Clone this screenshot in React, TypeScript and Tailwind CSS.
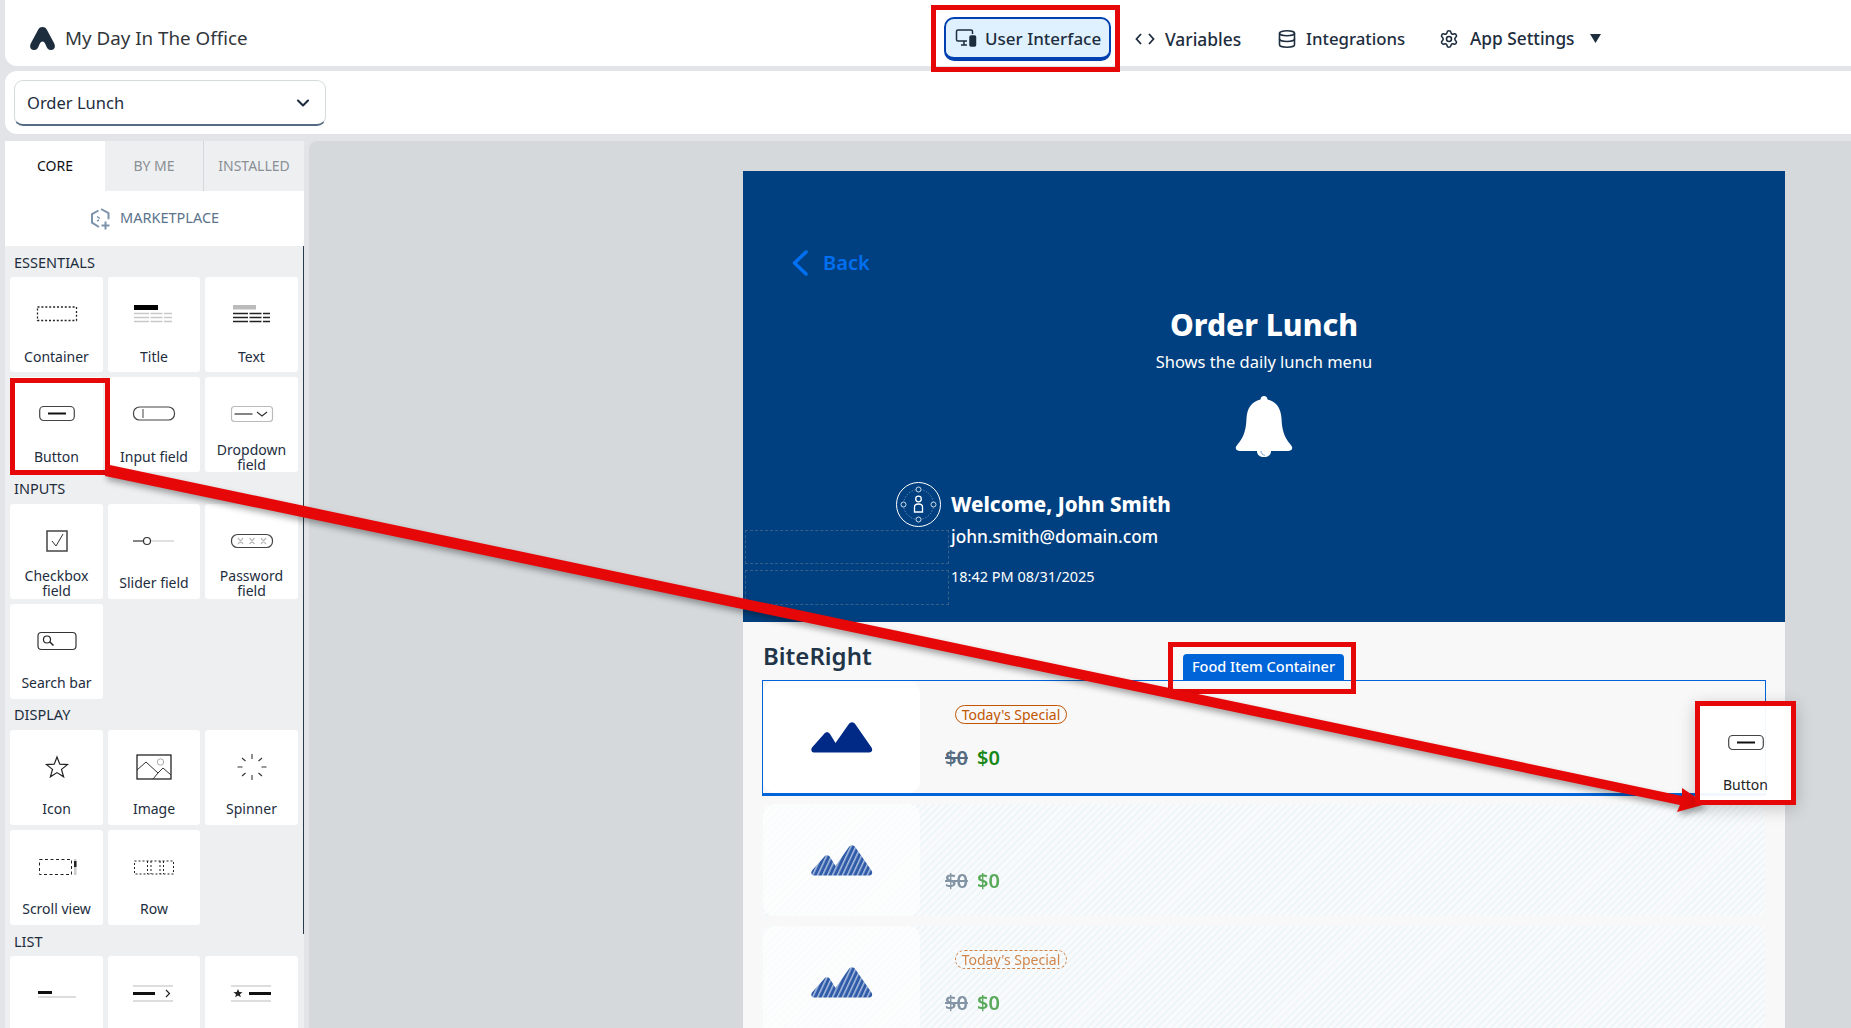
import React from "react";
import { ChevronDown, Database, Settings } from "lucide-react";

function Ico({ children }: { children: React.ReactNode }) {
  return (
    <svg width="48" height="32" viewBox="0 0 48 32" fill="none">
      {children}
    </svg>
  );
}

const icons: Record<string, React.ReactNode> = {
  Container: <rect x="4.5" y="10" width="39" height="13.500" stroke="#222" strokeWidth="1.300" strokeDasharray="2 1.900" />,
  Title: (
    <>
      <rect x="4" y="8" width="24" height="5" fill="#000" />
      <path d="M4 16.500h38M4 20.500h38M4 24.500h38" stroke="#c8c8c8" strokeWidth="1.500" strokeDasharray="15 1.500 12 1.500 8" />
    </>
  ),
  Text: (
    <>
      <rect x="5" y="8" width="23" height="4.500" fill="#bbb" />
      <path d="M5 16.500h37M5 20.500h37M5 24.500h37" stroke="#222" strokeWidth="1.500" strokeDasharray="15 1.500 12 1.500 8" />
    </>
  ),
  Button: (
    <>
      <rect x="6.700" y="9.500" width="34.600" height="14" rx="4" stroke="#444" strokeWidth="1.200" />
      <path d="M15 16.500h18" stroke="#111" strokeWidth="2" />
    </>
  ),
  "Input field": (
    <>
      <rect x="3.500" y="10" width="41" height="13" rx="6" stroke="#444" strokeWidth="1.200" />
      <path d="M13 12v9" stroke="#444" strokeWidth="1" />
    </>
  ),
  "Dropdown field": (
    <>
      <rect x="3.500" y="9.500" width="41" height="15" rx="3" stroke="#bbb" strokeWidth="1.200" />
      <path d="M6.500 17h18" stroke="#333" strokeWidth="1.200" />
      <path d="M29 15l5 4 5-4" stroke="#333" strokeWidth="1.200" />
    </>
  ),
  "Checkbox field": (
    <>
      <rect x="14" y="6" width="20" height="20" stroke="#444" strokeWidth="1.500" />
      <path d="M19 16l4 5 7-12" stroke="#333" strokeWidth="1" />
    </>
  ),
  "Slider field": (
    <>
      <path d="M3 16h10" stroke="#333" strokeWidth="1.200" />
      <path d="M21 16h23" stroke="#ccc" strokeWidth="1.200" />
      <circle cx="17" cy="16" r="3.500" stroke="#333" strokeWidth="1.200" />
    </>
  ),
  "Password field": (
    <>
      <rect x="3.500" y="9.500" width="41" height="13" rx="6" stroke="#444" strokeWidth="1.200" />
      <path d="M10 13l5 6M15 13l-5 6M21.500 13l5 6M26.500 13l-5 6M33 13l5 6M38 13l-5 6" stroke="#bbb" strokeWidth="1.200" />
    </>
  ),
  "Search bar": (
    <>
      <rect x="5" y="7.500" width="38" height="17" rx="3.500" stroke="#333" strokeWidth="1.200" />
      <circle cx="14" cy="14.500" r="3.500" stroke="#222" strokeWidth="1.200" />
      <path d="M17 17l3.500 3.500" stroke="#222" strokeWidth="1.500" />
    </>
  ),
  Icon: <path d="M24 6l2.800 7.200 7.700.4-6 4.800 2.100 7.400L24 21.600l-6.600 4.200 2.100-7.400-6-4.800 7.700-.4z" stroke="#222" strokeWidth="1.200" />,
  Image: (
    <>
      <rect x="7" y="4" width="34" height="24" stroke="#111" strokeWidth="1.200" />
      <circle cx="30.500" cy="11" r="3.200" stroke="#aaa" strokeWidth="1" />
      <path d="M7 19l9-8 12 11-5 6M28 22l5-5 8 7" stroke="#333" strokeWidth="1" />
    </>
  ),
  Spinner: <path d="M24 3v5M24 24v5M9.500 16h5M33.500 16h5M14 7l3.500 3M34 7l-3.500 3M14 25l3.500-3M34 25l-3.500-3" stroke="#333" strokeWidth="1.100" />,
  "Scroll view": (
    <>
      <rect x="6.500" y="8.500" width="32" height="15" stroke="#222" strokeWidth="1" strokeDasharray="3 2.500" />
      <rect x="41" y="8" width="2.500" height="16" fill="#ccc" />
      <rect x="41" y="10" width="2.500" height="6" fill="#222" />
    </>
  ),
  Row: (
    <>
      <rect x="4.500" y="10" width="39" height="13" stroke="#222" strokeWidth="1" strokeDasharray="2 2" />
      <path d="M17.500 10v13M21 10v13M30 10v13M33.500 10v13" stroke="#222" strokeWidth="1" strokeDasharray="2 2" />
    </>
  ),
  "List section": (
    <>
      <rect x="5" y="14" width="14" height="3" fill="#111" />
      <path d="M5 20h38" stroke="#bbb" strokeWidth="1.200" />
    </>
  ),
  "List item": (
    <>
      <path d="M3 9h40M3 24h40" stroke="#bbb" strokeWidth="1.200" />
      <rect x="3" y="15" width="22" height="3" fill="#111" />
      <path d="M36 13l3.500 3.500-3.500 3.500" stroke="#222" strokeWidth="1.200" />
    </>
  ),
  "Icon list": (
    <>
      <path d="M3 9h40M3 24h40" stroke="#bbb" strokeWidth="1.200" />
      <path d="M10 12l1.300 3 3.200.2-2.500 2 .8 3.100-2.800-1.700-2.800 1.700.8-3.100-2.500-2 3.200-.2z" fill="#222" />
      <rect x="21" y="15" width="22" height="3" fill="#111" />
    </>
  ),
};

function Tile({ name, low, noLabel }: { name: string; low: boolean; noLabel: boolean }) {
  return (
    <div className="h-[95px] bg-white rounded-[3px] flex flex-col items-center">
      <div className={`h-[64px] shrink-0 ${low ? "pt-[21px]" : "pt-[20px]"}`}>
        <Ico>{icons[name]}</Ico>
      </div>
      <div className={`flex items-center justify-center text-center text-[14px] leading-[15px] text-[#1d2d3e] px-2 ${low ? "h-[29px]" : "h-[31px]"}`}>
        {noLabel ? "" : name}
      </div>
    </div>
  );
}

function Group({ title, items, mt, gap, low }: { title: string; items: string[]; mt: string; gap: string; low?: boolean }) {
  return (
    <div>
      <div className={`${mt} h-[16px] leading-[16px] pl-[9px] text-[14.500px] text-[#1d2d3e]`}>{title}</div>
      <div className={`${gap} pl-[5px] grid grid-cols-[93px_92px_93px] gap-[5px]`}>
        {items.map((n) => (
          <Tile key={n} name={n} low={!!low} noLabel={n === "List item"} />
        ))}
      </div>
    </div>
  );
}

function Mountain({ hatched, id }: { hatched?: boolean; id: string }) {
  return (
    <svg width="62" height="31" viewBox="0 0 62 31">
      <defs>
        <pattern id={id} width="4.500" height="4.500" patternUnits="userSpaceOnUse" patternTransform="rotate(25)">
          <rect width="4.500" height="4.500" fill="#2f5ba8" />
          <rect width="1.500" height="4.500" fill="#a9bede" />
        </pattern>
      </defs>
      <path
        d="M3 30.500h55c3 0 4-2.500 2.500-5L44.500 2.500c-2-3-5-3-7 0L24.500 21 19 12c-1.500-2.500-4.500-2.500-6 0L1 25.500c-1.500 2.500-.5 5 2 5z"
        fill={hatched ? `url(#${id})` : "#002a86"}
      />
    </svg>
  );
}

function Special({ dashed }: { dashed?: boolean }) {
  return (
    <div
      className={`ml-[10px] h-[19px] w-[112px] rounded-full border border-[#c35500] flex items-center justify-center text-[14px] leading-none text-[#c35500] ${
        dashed ? "border-dashed opacity-70" : ""
      }`}
    >
      Today's Special
    </div>
  );
}

function Prices({ faded }: { faded?: boolean }) {
  return (
    <div className={`mt-[22px] h-[24px] flex items-center gap-[10px] text-[20px] font-semibold ${faded ? "opacity-70" : ""}`}>
      <span className="line-through text-[#556b81] w-[22px]">$0</span>
      <span className="text-[#188918] w-[22px]">$0</span>
    </div>
  );
}

const hatch =
  "bg-[repeating-linear-gradient(135deg,#eff6f9_0px,#eff6f9_2px,#f8fafb_2px,#f8fafb_5px)]";

function GhostCard({ tag, id }: { tag?: boolean; id: string }) {
  return (
    <div className={`ml-[20px] w-[1002px] h-[112px] ${hatch} flex rounded-sm`}>
      <div className="w-[157px] h-[112px] bg-white/60 rounded-xl flex items-center justify-center shrink-0">
        <Mountain hatched id={id} />
      </div>
      <div className="pl-[25px] pt-[24px]">
        {tag ? <Special dashed /> : <div className="h-[19px]" />}
        <Prices faded />
      </div>
    </div>
  );
}

export default function App() {
  return (
    <div className="relative w-full h-[1028px] overflow-hidden bg-[#e3e4e8] font-['Noto_Sans',sans-serif] text-[#1d2d3e]">
      {/* Top bar */}
      <div className="ml-[5px] h-[66px] bg-white rounded-bl-xl flex items-center pl-[25px]">
        <div className="w-[914px] mt-[10px] flex items-center gap-[10px]">
          <svg width="25" height="23" viewBox="0 0 25 23">
            <path
              d="M12.500 0c-2.300 0-3.600 1.300-4.500 3L1 16c-2 4-.500 7 3 7 3 0 4-2 5-4.500C10 16 11 14.500 12.500 14.500s2.500 1.500 3.500 4c1 2.500 2 4.500 5 4.500 3.500 0 5-3 3-7L17 3c-.9-1.700-2.200-3-4.500-3z"
              fill="#1d2d3e"
            />
          </svg>
          <span className="text-[18.800px] text-[#32363a] leading-none">My Day In The Office</span>
        </div>
        <div className="w-[167px] h-[44px] mt-[12px] rounded-[10px] border-2 border-[#0040b0] border-b-[4px] bg-[#dff1ff] flex items-center pl-[9px] gap-[8px]">
          <svg width="22" height="20" viewBox="0 0 22 20" fill="none" stroke="#1d2d3e" strokeWidth="1.500">
            <path d="M12 13H3a1.500 1.500 0 0 1-1.500-1.500v-8A1.500 1.500 0 0 1 3 2h13a1.500 1.500 0 0 1 1.500 1.500V6" />
            <path d="M6 17h6M9 13v4" />
            <rect x="15" y="8" width="5.500" height="10" fill="#1d2d3e" rx="1" />
          </svg>
          <span className="text-[17px] font-medium leading-none whitespace-nowrap">User Interface</span>
        </div>
        <div className="ml-[24px] flex items-center mt-[12px] font-medium">
          <svg width="20" height="14" viewBox="0 0 20 14" fill="none" stroke="#1d2d3e" strokeWidth="1.800">
            <path d="M6 2L1.500 7 6 12M14 2l4.500 5L14 12" />
          </svg>
          <span className="ml-[10px] w-[74px] text-[17.400px] whitespace-nowrap">Variables</span>
          <Database className="ml-[38px]" size={20} strokeWidth={1.900} />
          <span className="ml-[9px] w-[100px] text-[16.800px] whitespace-nowrap">Integrations</span>
          <Settings className="ml-[33px]" size={20} strokeWidth={1.900} />
          <span className="ml-[11px] w-[102px] text-[17.300px] whitespace-nowrap">App Settings</span>
          <svg className="ml-[18px]" width="11" height="9" viewBox="0 0 11 9">
            <path d="M0 0h11L5.500 9z" fill="#1d2d3e" />
          </svg>
        </div>
      </div>

      {/* Second bar */}
      <div className="mt-[5px] ml-[5px] h-[63px] bg-white rounded-l-xl flex items-center pl-[9px]">
        <div className="w-[312px] h-[46px] mt-[1px] rounded-[9px] border border-[#d5dadd] border-b-2 border-b-[#556b81] flex items-center justify-between pl-[12px] pr-[12px]">
          <span className="text-[16.500px] leading-none mt-[1px]">Order Lunch</span>
          <ChevronDown size={20} strokeWidth={2.500} />
        </div>
      </div>

      {/* Main */}
      <div className="mt-[7px] flex h-[887px]">
        {/* Sidebar */}
        <div className="ml-[5px] w-[299px] shrink-0 bg-[#eeeff1] overflow-hidden relative">
          <div className="flex h-[50px] text-[14px] bg-[#eeeff1]">
            <div className="w-[100px] bg-white flex items-center justify-center text-[#111] pb-[2px]">CORE</div>
            <div className="w-[99px] border-r border-[#d5d9dc] flex items-center justify-center text-[#8a8f95] pb-[2px]">BY ME</div>
            <div className="w-[100px] flex items-center justify-center text-[#8a8f95] pb-[2px]">INSTALLED</div>
          </div>
          <div className="h-[55px] bg-white flex items-center pl-[85px] gap-[9px] text-[14.500px] text-[#5b738b]">
            <svg width="21" height="23" viewBox="0 0 21 23" fill="none" stroke="#7d93aa" strokeWidth="2">
              <path d="M11 2l7.500 4.200v6M8.500 3.500L2 7.200v8.500L9 20" />
              <path d="M15.500 14.500v8M11.500 18.500h8" />
              <path d="M7 9.500l3 2M7 14l2-1" strokeWidth="1.500" />
            </svg>
            <span className="mb-[2px]">MARKETPLACE</span>
          </div>
          <div className="w-[1.500px] h-[688px] absolute left-[298px] top-[105px] bg-[#2b3a4a]" />
          <Group title="ESSENTIALS" mt="mt-[8px]" gap="mt-[7px]" items={["Container", "Title", "Text", "Button", "Input field", "Dropdown field"]} />
          <Group title="INPUTS" mt="mt-[8px]" gap="mt-[8px]" low items={["Checkbox field", "Slider field", "Password field", "Search bar"]} />
          <Group title="DISPLAY" mt="mt-[7px]" gap="mt-[8px]" low items={["Icon", "Image", "Spinner", "Scroll view", "Row"]} />
          <Group title="LIST" mt="mt-[8px]" gap="mt-[7px]" low items={["List section", "List item", "Icon list"]} />
        </div>

        {/* Canvas */}
        <div className="ml-[5px] flex-1 bg-[#d5d9dc] rounded-tl-lg pt-[30px] pl-[434px] overflow-hidden">
          <div className="w-[1042px] h-[857px] bg-[#f8f8f8]">
            {/* Header */}
            <div className="h-[451px] bg-[#004080] flex flex-col pt-[80px]">
              <div className="h-[24px] pl-[49px] flex items-center gap-[15px]">
                <svg width="16" height="26" viewBox="0 0 16 26" fill="none" stroke="#0070f2" strokeWidth="3.500" strokeLinecap="round" strokeLinejoin="round">
                  <path d="M14 2L2.500 13 14 24" />
                </svg>
                <span className="text-[20px] font-semibold text-[#0070f2]">Back</span>
              </div>
              <div className="mt-[32px] h-[36px] leading-[36px] text-center text-[30px] font-extrabold text-white">Order Lunch</div>
              <div className="mt-[7px] h-[24px] leading-[24px] text-center text-[16.500px] text-white">Shows the daily lunch menu</div>
              <div className="mt-[22px] flex justify-center">
                <svg width="58" height="61" viewBox="0 0 58 61">
                  <path
                    d="M29 0c2 0 3.500 1.500 3.500 3.500 9 2 13.500 9 14 19 .500 10 2 18 9 26 3 3.500 2 6-2 6.500H4.500c-4-.500-5-3-2-6.500 7-8 8.500-16 9-26 .500-10 5-17 14-19C25.500 1.500 27 0 29 0z"
                    fill="#fff"
                  />
                  <path d="M22 55h14c0 4-3 6-7 6s-7-2-7-6z" fill="#fff" />
                  <path d="M26 55c0 2.500 1.500 4 4 4.300" fill="none" stroke="#7f9fc6" strokeWidth="1" />
                </svg>
              </div>
              <div className="mt-[25px] flex">
                <div className="ml-[2px] w-[204px] flex flex-col">
                  <div className="self-end mr-[8px] w-[45px] h-[45px]">
                    <svg width="45" height="45" viewBox="0 0 45 45" fill="none" stroke="#fff">
                      <circle cx="22.500" cy="22.500" r="22" strokeWidth="1" />
                      <circle cx="22.500" cy="22.500" r="15" strokeWidth=".5" strokeDasharray="1.500 1.500" opacity=".7" />
                      <circle cx="22.500" cy="7.500" r="2.500" strokeWidth=".8" fill="#004080" />
                      <circle cx="22.500" cy="37.500" r="2.500" strokeWidth=".8" fill="#004080" />
                      <circle cx="7.500" cy="22.500" r="2.500" strokeWidth=".8" fill="#004080" />
                      <circle cx="37.500" cy="22.500" r="2.500" strokeWidth=".8" fill="#004080" />
                      <circle cx="22.500" cy="17" r="2.800" strokeWidth="1.300" />
                      <path d="M18.500 30v-5c0-2 1.500-3 4-3s4 1 4 3v5z" strokeWidth="1.300" />
                    </svg>
                  </div>
                  <div className="mt-[3px] h-[34px] border border-dashed border-[#3a5f86]" />
                  <div className="mt-[6px] h-[35px] border border-dashed border-[#3a5f86]" />
                </div>
                <div className="ml-[2px] pt-[8px] text-white">
                  <div className="h-[28px] leading-[28px] text-[20.500px] font-extrabold">Welcome, John Smith</div>
                  <div className="mt-[7px] h-[24px] leading-[24px] text-[17.300px] font-medium">john.smith@domain.com</div>
                  <div className="mt-[17px] h-[20px] leading-[20px] text-[14.500px]">18:42 PM 08/31/2025</div>
                </div>
              </div>
            </div>

            {/* Body */}
            <div className="h-[58px] flex items-end">
              <div className="self-start mt-[18px] ml-[20px] w-[420px] h-[32px] leading-[32px] text-[24px] font-semibold text-[#223548]">BiteRight</div>
              <div className="h-[26px] w-[161px] rounded-t-[4px] bg-[#0064d9] text-white text-[14.500px] font-medium flex items-center justify-center">
                Food Item Container
              </div>
            </div>
            <div className="ml-[19px] w-[1004px] h-[116px] border border-[#0064d9] border-b-[3px] flex">
              <div className="w-[157px] h-full bg-white rounded-xl flex items-center justify-center shrink-0">
                <Mountain id="solid" />
              </div>
              <div className="pl-[25px] pt-[24px]">
                <Special />
                <Prices />
              </div>
            </div>
            <div className="mt-[8px]">
              <GhostCard id="h1" />
            </div>
            <div className="mt-[10px]">
              <GhostCard id="h2" tag />
            </div>
          </div>
        </div>
      </div>

      {/* Annotations */}
      <div className="absolute left-[931px] top-[5px] w-[189px] h-[67px] border-[5px] border-[#e60808]" />
      <div className="absolute left-[1168px] top-[642px] w-[188px] h-[52px] border-[5px] border-[#e60808]" />
      <div className="absolute left-[10px] top-[378px] w-[100px] h-[97px] border-[5px] border-[#e60808]" />
      <svg className="absolute left-0 top-0 drop-shadow-[2px_4px_3px_rgba(0,0,0,0.35)]" width="1851" height="1028" viewBox="0 0 1851 1028">
        <path d="M105 464L1682 796 1682 788 1706 804 1677 812 1680 805 105 476z" fill="#e60808" />
      </svg>
      <div className="absolute left-[1695px] top-[701px] w-[101px] h-[104px] border-[5px] border-[#e60808] bg-white/95 shadow-[0_4px_16px_rgba(0,0,0,0.2)] flex flex-col items-center">
        <div className="mt-[20px] h-[32px]">
          <Ico>{icons.Button}</Ico>
        </div>
        <div className="mt-[19px] text-[14px] leading-[15px] text-[#222]">Button</div>
      </div>
    </div>
  );
}
